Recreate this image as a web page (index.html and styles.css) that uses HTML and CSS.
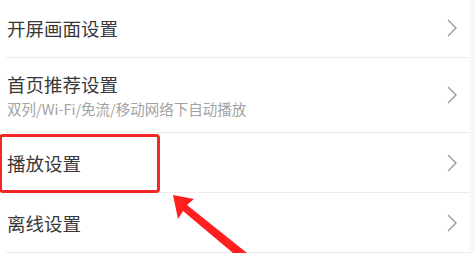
FILE: index.html
```html
<!DOCTYPE html>
<html lang="zh-CN">
<head>
<meta charset="utf-8">
<link rel="stylesheet" href="styles.css">
</head>
<body>
<div class="page">
  <div class="list">
    <div class="row row-1">
      <div class="texts"><div class="title">开屏画面设置</div></div>
      <svg class="chev" viewBox="0 0 10 18" width="10" height="18"><path d="M1 1 L9 9 L1 17" fill="none" stroke="#9a9a9a" stroke-width="1.4"/></svg>
    </div>
    <div class="row row-2">
      <div class="texts">
        <div class="title">首页推荐设置</div>
        <div class="sub">双列/Wi-Fi/免流/移动网络下自动播放</div>
      </div>
      <svg class="chev" viewBox="0 0 10 18" width="10" height="18"><path d="M1 1 L9 9 L1 17" fill="none" stroke="#9a9a9a" stroke-width="1.4"/></svg>
    </div>
    <div class="row row-3">
      <div class="texts"><div class="title">播放设置</div></div>
      <svg class="chev" viewBox="0 0 10 18" width="10" height="18"><path d="M1 1 L9 9 L1 17" fill="none" stroke="#9a9a9a" stroke-width="1.4"/></svg>
    </div>
    <div class="row row-4">
      <div class="texts"><div class="title">离线设置</div></div>
      <svg class="chev" viewBox="0 0 10 18" width="10" height="18"><path d="M1 1 L9 9 L1 17" fill="none" stroke="#9a9a9a" stroke-width="1.4"/></svg>
    </div>
  </div>
  <div class="strip"></div>
  <div class="highlight"></div>
  <svg class="arrow" viewBox="0 0 475 253" width="475" height="253">
    <polygon points="173,195 194,199 187,205 247,253 233,253 183,211 178,219" fill="#ff1f1f"/>
  </svg>
</div>
</body>
</html>
```
FILE: styles.css
```css
html, body {
  margin: 0;
  padding: 0;
  background: #ffffff;
}
.page {
  position: relative;
  width: 475px;
  height: 253px;
  overflow: hidden;
  display: flex;
  font-family: "Noto Sans CJK SC", "Noto Sans", sans-serif;
}
.list {
  width: 470px;
  display: flex;
  flex-direction: column;
}
.strip {
  width: 5px;
  background: #f7f7f7;
}
.row {
  display: flex;
  align-items: center;
  justify-content: space-between;
  margin-left: 6px;
  padding-left: 1px;
  padding-right: 13px;
  border-bottom: 1px solid #ececec;
  box-sizing: border-box;
}
.row-1 { height: 58px; }
.row-2 { height: 76px; }
.row-3 { height: 60px; }
.row-4 { height: 60px; }
.texts {
  display: flex;
  flex-direction: column;
}
.title {
  font-size: 18.5px;
  line-height: 24px;
  color: #383838;
}
.sub {
  font-size: 14.5px;
  line-height: 18px;
  color: #a3a3a3;
  margin-top: 4px;
}
.chev {
  display: block;
}
.highlight {
  position: absolute;
  left: -1px;
  top: 134px;
  width: 161px;
  height: 59px;
  border: 3px solid #f42626;
  border-radius: 4px;
  box-sizing: border-box;
}
.arrow {
  position: absolute;
  left: 0;
  top: 0;
}
```
